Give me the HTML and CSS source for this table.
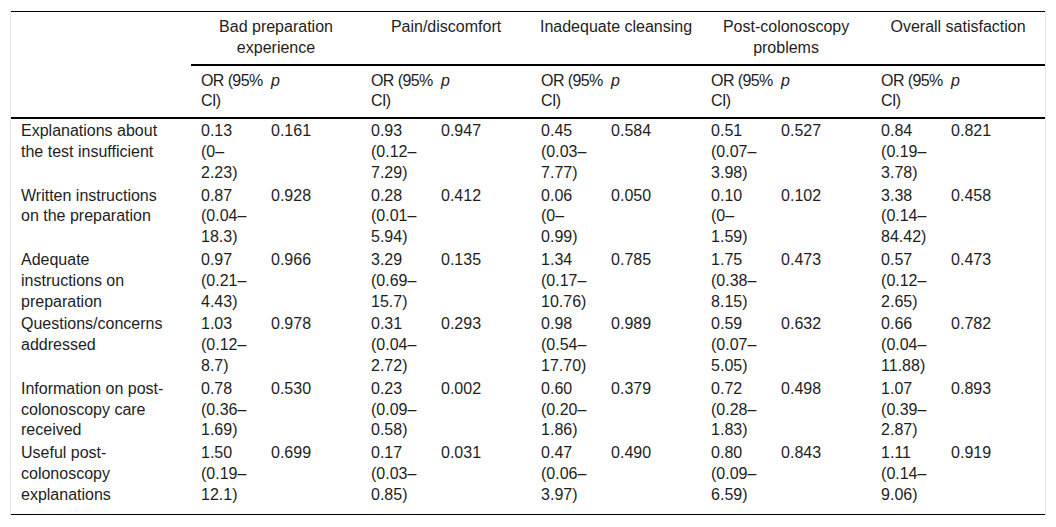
FILE: index.html
```html
<!DOCTYPE html>
<html lang="en">
<head>
<meta charset="utf-8">
<title>Table</title>
<link rel="stylesheet" href="styles.css">
</head>
<body>
<div class="frame">
<table class="tbl">
  <colgroup>
    <col class="c-label">
    <col class="c-or"><col class="c-p">
    <col class="c-or"><col class="c-p">
    <col class="c-or"><col class="c-p">
    <col class="c-or"><col class="c-p">
    <col class="c-or"><col class="c-plast">
  </colgroup>
  <thead>
    <tr>
      <th class="corner" rowspan="2"></th>
      <th class="group" colspan="2">Bad preparation experience</th>
      <th class="group" colspan="2">Pain/discomfort</th>
      <th class="group" colspan="2">Inadequate cleansing</th>
      <th class="group" colspan="2">Post-colonoscopy problems</th>
      <th class="group" colspan="2">Overall satisfaction</th>
    </tr>
    <tr>
      <th class="sub or">OR&nbsp;(95% CI)</th><th class="sub"><i>p</i></th>
      <th class="sub or">OR&nbsp;(95% CI)</th><th class="sub"><i>p</i></th>
      <th class="sub or">OR&nbsp;(95% CI)</th><th class="sub"><i>p</i></th>
      <th class="sub or">OR&nbsp;(95% CI)</th><th class="sub"><i>p</i></th>
      <th class="sub or">OR&nbsp;(95% CI)</th><th class="sub"><i>p</i></th>
    </tr>
  </thead>
  <tbody>
    <tr>
      <td class="label">Explanations about the test insufficient</td>
      <td>0.13 (0–2.23)</td><td>0.161</td>
      <td>0.93 (0.12–7.29)</td><td>0.947</td>
      <td>0.45 (0.03–7.77)</td><td>0.584</td>
      <td>0.51 (0.07–3.98)</td><td>0.527</td>
      <td>0.84 (0.19–3.78)</td><td>0.821</td>
    </tr>
    <tr>
      <td class="label">Written instructions on the preparation</td>
      <td>0.87 (0.04–18.3)</td><td>0.928</td>
      <td>0.28 (0.01–5.94)</td><td>0.412</td>
      <td>0.06 (0–0.99)</td><td>0.050</td>
      <td>0.10 (0–1.59)</td><td>0.102</td>
      <td>3.38 (0.14–84.42)</td><td>0.458</td>
    </tr>
    <tr>
      <td class="label">Adequate instructions on preparation</td>
      <td>0.97 (0.21–4.43)</td><td>0.966</td>
      <td>3.29 (0.69–15.7)</td><td>0.135</td>
      <td>1.34 (0.17–10.76)</td><td>0.785</td>
      <td>1.75 (0.38–8.15)</td><td>0.473</td>
      <td>0.57 (0.12–2.65)</td><td>0.473</td>
    </tr>
    <tr>
      <td class="label">Questions/concerns addressed</td>
      <td>1.03 (0.12–8.7)</td><td>0.978</td>
      <td>0.31 (0.04–2.72)</td><td>0.293</td>
      <td>0.98 (0.54–17.70)</td><td>0.989</td>
      <td>0.59 (0.07–5.05)</td><td>0.632</td>
      <td>0.66 (0.04–11.88)</td><td>0.782</td>
    </tr>
    <tr>
      <td class="label">Information on post-colonoscopy care received</td>
      <td>0.78 (0.36–1.69)</td><td>0.530</td>
      <td>0.23 (0.09–0.58)</td><td>0.002</td>
      <td>0.60 (0.20–1.86)</td><td>0.379</td>
      <td>0.72 (0.28–1.83)</td><td>0.498</td>
      <td>1.07 (0.39–2.87)</td><td>0.893</td>
    </tr>
    <tr class="last">
      <td class="label">Useful post-colonoscopy explanations</td>
      <td>1.50 (0.19–12.1)</td><td>0.699</td>
      <td>0.17 (0.03–0.85)</td><td>0.031</td>
      <td>0.47 (0.06–3.97)</td><td>0.490</td>
      <td>0.80 (0.09–6.59)</td><td>0.843</td>
      <td>1.11 (0.14–9.06)</td><td>0.919</td>
    </tr>
  </tbody>
</table>
</div>
</body>
</html>
```

FILE: styles.css
```css
html, body {
  margin: 0;
  padding: 0;
  background: #ffffff;
}

body {
  font-family: "Liberation Sans", Arial, sans-serif;
  font-size: 16px;
  color: #1e1e1e;
}

.frame {
  margin: 10px 0 0 10px;
  width: 1034px;
  padding-top: 1px;
  border-left: 1px solid #e6e6e6;
  border-right: 1px solid #e6e6e6;
}

.tbl {
  width: 1034px;
  table-layout: fixed;
  border-collapse: separate;
  border-spacing: 0;
  border-top: 1px solid #000000;
  border-bottom: 1px solid #000000;
  line-height: 20.8px;
}

.c-label { width: 180px; }
.c-or { width: 70px; }
.c-p { width: 100px; }
.c-plast { width: 104px; }

.tbl th {
  font-weight: normal;
  padding: 5px 8px;
  vertical-align: top;
}

.tbl th.corner {
  border-bottom: 2px solid #000000;
}

.tbl th.group {
  text-align: center;
  border-bottom: 2px solid #000000;
}

.tbl th.sub {
  text-align: left;
  padding: 5px 10px 5px 10px;
  border-bottom: 2px solid #000000;
}

.tbl th.or {
  letter-spacing: -0.6px;
}

.tbl td {
  text-align: left;
  vertical-align: top;
  padding: 2px 10px 0 10px;
}

.tbl td.label {
  padding-right: 20px;
}

.tbl tr.last td {
  padding-bottom: 8.4px;
}
```
